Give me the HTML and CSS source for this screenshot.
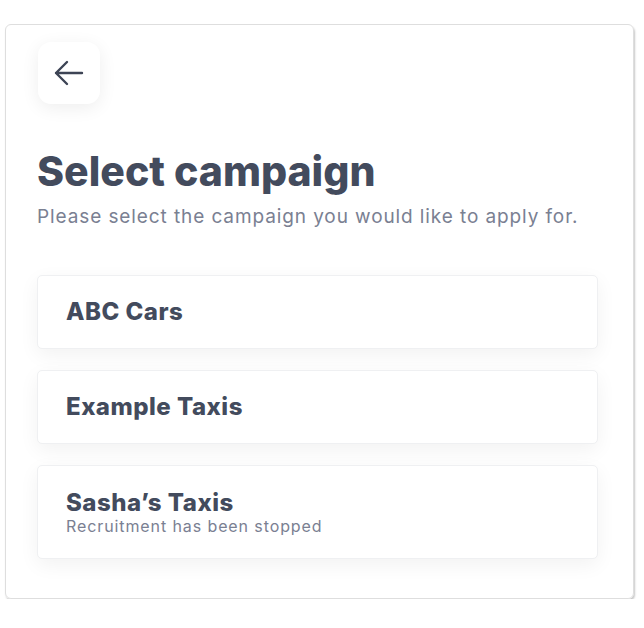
FILE: index.html
```html
<!DOCTYPE html>
<html lang="en">
<head>
<meta charset="utf-8">
<title>Select campaign</title>
<link rel="stylesheet" href="styles.css">
</head>
<body>
<main class="panel">
  <button class="back" aria-label="Back">
    <svg width="30" height="26" viewBox="0 0 30 26" fill="none" stroke="#3d4455" stroke-width="2.4" stroke-linecap="round" stroke-linejoin="round"><path d="M28 13H2M13 2L2 13L13 24"/></svg>
  </button>
  <h1 class="title">Select campaign</h1>
  <p class="subtitle">Please select the campaign you would like to apply for.</p>
  <ul class="list">
    <li class="item"><span class="name">ABC Cars</span></li>
    <li class="item"><span class="name">Example Taxis</span></li>
    <li class="item item-tall"><span class="name">Sasha’s Taxis</span><span class="note">Recruitment has been stopped</span></li>
  </ul>
</main>
</body>
</html>
```
FILE: styles.css
```css
* { box-sizing: border-box; }
html, body { margin: 0; padding: 0; background: #fff; }
body { font-family: Inter, "Noto Sans", sans-serif; color: #434b5d; }
.panel {
  margin: 24px 0 0 5px;
  width: 629px;
  border: 1px solid #dedede;
  border-radius: 6px;
  box-shadow: 1px 2px 2px rgba(0,0,0,0.22);
  padding: 17px 35px 39px 31px;
  display: flex;
  flex-direction: column;
}
.panel > * { flex-shrink: 0; }
.back {
  width: 62px; height: 62px;
  margin-left: 1px;
  border: 0;
  border-radius: 13px;
  background: #fff;
  box-shadow: 0 4px 18px rgba(0,0,0,0.07);
  display: flex; align-items: center; justify-content: center;
  padding: 0;
}
.title {
  margin: 41px 0 0;
  font-size: 41px;
  font-weight: 800;
  line-height: 52px;
  letter-spacing: 0;
}
.subtitle {
  margin: 7px 0 0;
  font-size: 19px;
  font-weight: 400;
  line-height: 26px;
  letter-spacing: 0.9px;
  color: #7a8092;
}
.list { list-style: none; margin: 45px 0 0; padding: 0; display: flex; flex-direction: column; gap: 21px; }
.item {
  height: 74px;
  background: #fff;
  border: 1px solid #eff0f2;
  border-radius: 5px;
  box-shadow: 0 6px 20px rgba(0,0,0,0.055);
  padding: 0 28px;
  display: flex; flex-direction: column; justify-content: center;
}
.item-tall { height: 94px; }
.name { font-size: 24px; font-weight: 800; line-height: 28px; letter-spacing: 0.5px; }
.note { font-size: 16px; line-height: 18px; letter-spacing: 0.9px; color: #7a8092; }
```
